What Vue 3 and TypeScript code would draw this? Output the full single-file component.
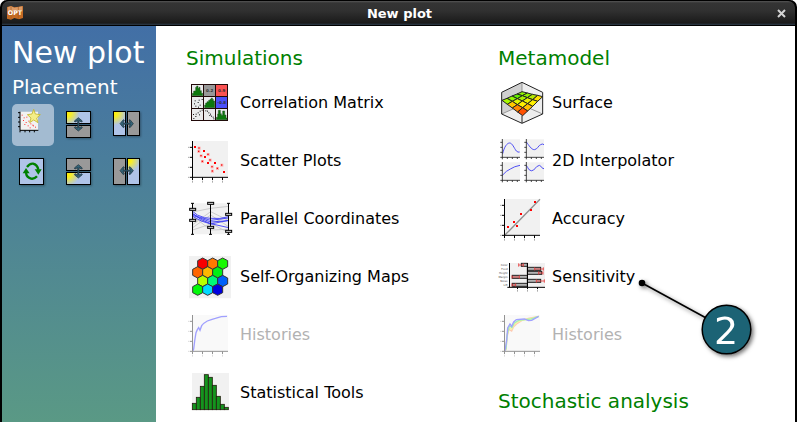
<script setup lang="ts">
import { ref } from 'vue'

interface PlotItem {
  label: string
  icon: string
  box: string
  disabled?: boolean
  callout?: string
}

interface PlotGroup {
  title: string
  items: PlotItem[]
}

interface Placement {
  id: string
  label: string
  box: string
}

type Point = [number, number]

const columns: PlotGroup[][] = [
  [
    {
      title: 'Simulations',
      items: [
        { label: 'Correlation Matrix', icon: 'matrix', box: '18 9 144 144' },
        { label: 'Scatter Plots', icon: 'scatter', box: '18 12 144 144' },
        { label: 'Parallel Coordinates', icon: 'parallel', box: '18 12 144 144' },
        { label: 'Self-Organizing Maps', icon: 'som', box: '18 12 144 144' },
        { label: 'Histories', icon: 'history', box: '18 12 144 144', disabled: true },
        { label: 'Statistical Tools', icon: 'stats', box: '18 186 144 144' },
      ],
    },
  ],
  [
    {
      title: 'Metamodel',
      items: [
        { label: 'Surface', icon: 'surface', box: '24 9 144 144' },
        { label: '2D Interpolator', icon: 'interpolator', box: '24 183 144 144' },
        { label: 'Accuracy', icon: 'accuracy', box: '24 12 144 144' },
        { label: 'Sensitivity', icon: 'sensitivity', box: '24 186 144 144', callout: '2' },
        { label: 'Histories', icon: 'histories', box: '24 12 144 144', disabled: true },
      ],
    },
    { title: 'Stochastic analysis', items: [] },
  ],
]

const placements: Placement[] = [
  { id: 'new', label: 'New window', box: '36 27 126 126' },
  { id: 'above', label: 'Split above', box: '177 27 126 126' },
  { id: 'left', label: 'Split left', box: '318 27 126 126' },
  { id: 'replace', label: 'Replace', box: '36 168 126 126' },
  { id: 'below', label: 'Split below', box: '177 168 126 126' },
  { id: 'right', label: 'Split right', box: '318 168 126 126' },
]

const placement = ref('new')

const matrixDots: Point[] = [
  [45, 77], [57, 75], [66, 73], [43, 86], [54, 82], [60, 90], [47, 93], [55, 96],
  [41, 130], [47, 124], [48, 117], [54, 113], [60, 108], [66, 105], [40, 118], [58, 119],
  [77, 107], [82, 108], [86, 113], [91, 117], [94, 123], [99, 126], [101, 131], [89, 121],
]

const scatterDots: Point[] = [[45, 45], [72, 57], [75, 75], [84, 93], [105, 93], [132, 120]]
const scatterSoft: Point[] = [
  [57, 48], [56, 58], [84, 67], [63, 71], [67, 88], [90, 84], [96, 104], [112, 109], [125, 99], [97, 117],
]
const miniDots: Point[] = [
  [66, 60], [72, 68], [80, 66], [70, 76], [78, 82], [74, 88], [86, 78], [92, 86], [84, 92], [98, 90], [90, 98], [106, 96], [100, 92],
]
const accuracyDots: Point[] = [[54, 111], [72, 96], [81, 108], [93, 72], [123, 60], [135, 36]]

const hexes: { at: Point; fill: string }[] = [
  { at: [68, 47], fill: '#f80000' }, { at: [98, 47], fill: '#ff7800' }, { at: [128, 47], fill: '#18f800' },
  { at: [53, 73], fill: '#ff6600' }, { at: [83, 73], fill: '#ffb800' }, { at: [113, 73], fill: '#00f014' },
  { at: [68, 99], fill: '#b8ff00' }, { at: [98, 99], fill: '#00f878' }, { at: [128, 99], fill: '#0060f8' },
  { at: [53, 125], fill: '#00f808' }, { at: [83, 125], fill: '#00d8ff' }, { at: [113, 125], fill: '#0000e0' },
]

const bars: number[] = [292, 274, 241, 206, 214, 238, 271, 295, 304]

const handles: Point[] = [[38, 58], [38, 91], [92, 40], [92, 112], [146, 73], [146, 124]]

const tileColors: string[] = [
  '#8df000', '#90f000', '#b4e800', '#ffe000',
  '#60f000', '#a8f000', '#e8f000', '#fff000',
  '#90f800', '#e0f800', '#fff000', '#ffc000',
  '#a8f800', '#ffc800', '#ff8800', '#ff5000',
]

const xAt = (u: number, v: number): number => Math.round(96 + 62 * u - 60 * v)

const yAt = (u: number, v: number): number =>
  Math.round(50 * (1 - u) * (1 - v) + 65 * u * (1 - v) + 76 * v * (1 - u) + 122 * u * v)

const tiles = tileColors.map((fill, i) => {
  const u = (i % 4) / 4
  const v = Math.floor(i / 4) / 4
  const corners: Point[] = [[u, v], [u + 0.25, v], [u + 0.25, v + 0.25], [u, v + 0.25]]
  return { fill, points: corners.map(([a, b]) => `${xAt(a, b)},${yAt(a, b)}`).join(' ') }
})

const factors = [
  { y: 220, x: 94, w: 18, from: 86, to: 100 },
  { y: 232, x: 112, w: 40, from: 134, to: 160 },
  { y: 244, x: 112, w: 43, from: 146, to: 159 },
  { y: 256, x: 67, w: 45, from: 66, to: 88 },
  { y: 268, x: 112, w: 40, from: 139, to: 163 },
  { y: 280, x: 67, w: 45, from: 66, to: 77 },
]
const factorNames: string[] = ['Color', 'Feed', 'Height', 'Margin', 'Noise', 'Lift']

const miniCurves: { x: number; y: number; d: string }[] = [
  { x: 37, y: 195, d: 'M1 41C6 20 14 9 22 9S35 24 42 33Q47 38 52 36' },
  { x: 109, y: 195, d: 'M0 6C8 16 15 29 24 29S37 15 43 14Q48 10 53 14' },
  { x: 37, y: 264, d: 'M0 37Q12 23 24 18Q36 10 53 7' },
  { x: 109, y: 264, d: 'M0 8Q4 12 7 19Q15 27 22 21L31 11Q40 3 45 11Q48 18 53 17' },
]
</script>

<template>
  <div class="window">
    <header class="titlebar">
      <svg class="logo" viewBox="0 0 48 42" aria-hidden="true">
        <path class="book-back" d="M0 3L12 0L22 4L36 2L48 0V36L36 40L22 36L12 41L0 38Z" />
        <path class="book-light" d="M2 4L12 1L22 5L34 3L46 1V13L2 17Z" />
        <path class="book-fold" d="M12 2V39M34 3V38" />
        <text x="24" y="28" text-anchor="middle">OPT</text>
      </svg>
      <span class="caption">New plot</span>
      <button class="close" type="button" aria-label="Close">
        <svg viewBox="0 0 9 9" aria-hidden="true"><path d="M1 1L8 8M8 1L1 8" /></svg>
      </button>
    </header>

    <div class="body">
      <aside class="sidebar">
        <h1>New plot</h1>
        <h2>Placement</h2>
        <div class="placements">
          <button
            v-for="p in placements"
            :key="p.id"
            type="button"
            class="place"
            :class="{ selected: placement === p.id }"
            :aria-label="p.label"
            :aria-pressed="placement === p.id"
            @click="placement = p.id"
          >
            <svg :viewBox="p.box" aria-hidden="true">
              <defs>
                <radialGradient :id="`glow-${p.id}`" gradientUnits="userSpaceOnUse" :cx="p.id === 'right' ? 386 : p.id === 'left' ? 344 : 204" :cy="p.id === 'right' ? 196 : p.id === 'below' ? 238 : 56" r="34">
                  <stop offset="0" stop-color="#fff000" />
                  <stop offset="0.3" stop-color="#f4ec30" />
                  <stop offset="1" stop-color="#b0c4e8" />
                </radialGradient>
              </defs>
              <template v-if="p.id === 'new'">
                <path fill="#f2f2f2" d="M60 50H114V105H60Z" />
                <rect v-for="(d, i) in miniDots" :key="i" :x="d[0] - 1" :y="d[1] - 1" width="3" height="3" fill="#ff3838" />
                <path class="axis" d="M60 50V106H115M54 53H60M54 67H60M54 81H60M54 95H60M60 106V112M75 106V112M89 106V112M103 106V112" />
                <path fill="#f4ee88" stroke="#c4b42c" stroke-width="2.5" d="M101 43L106 57L121 59L110 69L114 83L101 75L89 83L93 69L82 59L96 57Z" />
              </template>
              <template v-else-if="p.id === 'replace'">
                <rect x="58.500" y="190.500" width="72" height="78" fill="#b0c4e8" class="frame" />
                <g fill="none" stroke="#008000" stroke-width="7">
                  <path d="M81 216Q89 205 99 206Q112 209 115 224" />
                  <path d="M111 244Q103 253 93 251Q80 247 78 234" />
                </g>
                <path fill="#008000" d="M104 223H125L115 239ZM68 235H89L78 219Z" />
              </template>
              <template v-else-if="p.id === 'above'">
                <rect x="199.500" y="49.500" width="72" height="36" fill="url(#glow-above)" class="frame" />
                <rect x="199.500" y="91.500" width="72" height="36" fill="#999" class="frame" />
                <path class="arrow" d="M235 68L247 78L245 81L237 77V99L245 95L247 98L235 108L223 98L225 95L233 99V77L225 81L223 78Z" />
              </template>
              <template v-else-if="p.id === 'below'">
                <rect x="199.500" y="190.500" width="72" height="36" fill="#999" class="frame" />
                <rect x="199.500" y="232.500" width="72" height="36" fill="url(#glow-below)" class="frame" />
                <path class="arrow" d="M235 209L247 219L245 222L237 218V240L245 236L247 239L235 249L223 239L225 236L233 240V218L225 222L223 219Z" />
              </template>
              <template v-else-if="p.id === 'left'">
                <rect x="340.500" y="49.500" width="36" height="72" fill="url(#glow-left)" class="frame" />
                <rect x="382.500" y="49.500" width="36" height="72" fill="#999" class="frame" />
                <path class="arrow" d="M360 86L370 74L373 76L369 84H391L387 76L390 74L400 86L390 98L387 96L391 88H369L373 96L370 98Z" />
              </template>
              <template v-else>
                <rect x="340.500" y="190.500" width="36" height="78" fill="#999" class="frame" />
                <rect x="382.500" y="190.500" width="36" height="78" fill="url(#glow-right)" class="frame" />
                <path class="arrow" d="M360 227L370 215L373 217L369 225H391L387 217L390 215L400 227L390 239L387 237L391 229H369L373 237L370 239Z" />
              </template>
            </svg>
          </button>
        </div>
      </aside>

      <main class="content">
        <div v-for="(groups, c) in columns" :key="c" class="column">
          <section v-for="group in groups" :key="group.title">
            <h3>{{ group.title }}</h3>
            <ul v-if="group.items.length">
              <li v-for="item in group.items" :key="item.icon">
                <button type="button" class="plot" :disabled="item.disabled">
                  <svg class="icon" :viewBox="item.box" aria-hidden="true">
                    <template v-if="item.icon === 'matrix'">
                      <path fill="#200808" d="M33 27H144V138H33Z" />
                      <path fill="#eaeaec" d="M36 30H69V63H36ZM36 66H69V99H36ZM72 66H105V99H72ZM36 102H69V135H36ZM72 102H105V135H72ZM108 102H141V135H108Z" />
                      <path fill="#989898" d="M72 30H105V63H72Z" />
                      <path fill="#fa5252" d="M108 30H141V63H108Z" />
                      <path fill="#4c50f8" d="M108 66H141V99H108Z" />
                      <g fill="#0c780c" stroke="#245024" stroke-width="1.500">
                        <path d="M37 62V55H41V48H47V37H50V33H54V40H57V37H60V47H64V55H68V62Z" />
                        <path d="M74 98V90H77V84H81V80H86V76H90V73H94V69H97V73H100V78H104V98Z" />
                        <path d="M109 134V127H113V117H115V106H121V116H124V121H128V108H134V120H138V129H141V134Z" />
                      </g>
                      <rect v-for="(d, i) in matrixDots" :key="i" :x="d[0] - 1" :y="d[1] - 1" width="3" height="3" fill="#111" />
                      <g class="cell">
                        <text x="89" y="51">0.2</text>
                        <text x="125" y="51">0.9</text>
                        <text x="125" y="87">-0.8</text>
                      </g>
                    </template>

                    <template v-else-if="item.icon === 'scatter'">
                      <path fill="#f1f1f1" d="M38 27H144V136H38Z" />
                      <rect v-for="(d, i) in scatterSoft" :key="`s${i}`" :x="d[0] - 4" :y="d[1] - 4" width="9" height="9" fill="#ffb4b4" />
                      <rect v-for="(d, i) in scatterSoft" :key="`c${i}`" :x="d[0] - 2" :y="d[1] - 2" width="4" height="4" fill="#f01010" />
                      <rect v-for="(d, i) in scatterDots" :key="`d${i}`" :x="d[0] - 3" :y="d[1] - 3" width="6" height="6" fill="#f00" />
                      <path class="axis" d="M37.500 27V137M30 136H144M30 46H37M30 76H37M30 106H37M37.500 136V144M67.500 136V144M97.500 136V144M127.500 136V144" />
                      <path class="marks" d="M24 46H29M24 76H29M24 106H29M24 136H29M37.500 146V152M67.500 146V152M97.500 146V152M127.500 146V152" />
                    </template>

                    <template v-else-if="item.icon === 'parallel'">
                      <path fill="#f1f1f1" d="M38 40H146V133H38Z" />
                      <path fill="none" stroke="#c4c4c4" stroke-width="2.500" d="M38 66L92 55L146 49M38 120L92 102L146 78M38 104L92 65L146 92M38 85L92 100L146 128M38 113L92 75L146 110M38 78L92 120L146 118" />
                      <path fill="none" stroke="#3030f4" stroke-width="2.500" d="M38 64L52 75Q75 86 92 85Q120 88 146 80M38 72L54 80L92 91L146 84M38 76L92 96L146 92M38 70L62 88L92 101L146 113M38 79L64 93L92 102L146 91" />
                      <path class="axis" d="M37.500 40V133M91.500 40V133M145.500 40V133M33 40H42M87 40H96M141 40H150M33 133H42M87 133H96M141 133H150" />
                      <rect v-for="(h, i) in handles" :key="i" :x="h[0] - 9" :y="h[1] - 3" width="18" height="6" fill="#ddd" stroke="#000" stroke-width="3" />
                    </template>

                    <template v-else-if="item.icon === 'som'">
                      <path fill="#f1f1f1" d="M27 24H153V151H27Z" />
                      <path
                        v-for="(h, i) in hexes"
                        :key="i"
                        d="M0 -17L15 -9V9L0 17L-15 9V-9Z"
                        :transform="`translate(${h.at[0]} ${h.at[1]})`"
                        :fill="h.fill"
                        stroke="#333"
                        stroke-width="3"
                      />
                    </template>

                    <template v-else-if="item.icon === 'history'">
                      <path fill="#f1f1f1" d="M38 27H144V136H38Z" />
                      <path fill="none" stroke="#2020ff" stroke-width="4" d="M38 136L41 129L44 105L48 80L52 71L56 65L60 73L65 59Q71 51 82 45Q94 40 106 37L124 32Q134 31 141 31" />
                      <path class="axis" d="M37.500 27V137M30 136H144M30 46H37M30 76H37M30 106H37M37.500 136V144M67.500 136V144M97.500 136V144M127.500 136V144" />
                      <path class="marks" d="M24 46H29M24 76H29M24 106H29M24 136H29M37.500 146V152M67.500 146V152M97.500 146V152M127.500 146V152" />
                    </template>

                    <template v-else-if="item.icon === 'stats'">
                      <path fill="#f1f1f1" d="M36 201H147V312H36Z" />
                      <rect v-for="(top, i) in bars" :key="i" :x="37 + i * 12" :y="top" width="12" :height="311 - top" fill="#14941e" stroke="#242010" stroke-width="2.500" />
                    </template>

                    <template v-else-if="item.icon === 'surface'">
                      <path fill="#eee" d="M96 22L158 52V117L96 145L35 117V52Z" />
                      <path fill="#d0d0d0" d="M96 22V90L35 117V52Z" />
                      <path fill="none" stroke="#888" stroke-width="2.500" d="M96 24V90M96 90L35 117M96 90L158 117" />
                      <polygon v-for="(t, i) in tiles" :key="i" :points="t.points" :fill="t.fill" stroke="#222" stroke-width="3" />
                      <path fill="none" stroke="#222" stroke-width="3" d="M96 22L158 52V117L96 145L35 117V52ZM96 122V144" />
                    </template>

                    <template v-else-if="item.icon === 'interpolator'">
                      <g v-for="(m, i) in miniCurves" :key="i" :transform="`translate(${m.x} ${m.y})`">
                        <path fill="#f1f1f1" d="M0 -2H53V52H0Z" />
                        <path fill="none" stroke="#5050f4" stroke-width="3" :d="m.d" />
                        <path fill="none" stroke="#222" stroke-width="2.500" d="M0 -3V58M-6 52H53M-6 7H0M-6 22H0M-6 37H0M15 52V57M30 52V57M45 52V57" />
                      </g>
                    </template>

                    <template v-else-if="item.icon === 'accuracy'">
                      <path fill="#f1f1f1" d="M44 27H150V136H44Z" />
                      <path stroke="#909090" stroke-width="4" d="M44 136L150 28" />
                      <rect v-for="(d, i) in accuracyDots" :key="i" :x="d[0] - 3" :y="d[1] - 3" width="6" height="6" fill="#f00" />
                      <path class="axis" d="M43.500 27V137M36 136H150M36 46H43M36 76H43M36 106H43M43.500 136V144M73.500 136V144M103.500 136V144M133.500 136V144" />
                      <path class="marks" d="M30 46H35M30 76H35M30 106H35M30 136H35M43.500 146V152M73.500 146V152M103.500 146V152M133.500 146V152" />
                    </template>

                    <template v-else-if="item.icon === 'sensitivity'">
                      <path fill="#f1f1f1" d="M60 219H165V292H60Z" />
                      <g v-for="(f, i) in factors" :key="i">
                        <rect :x="f.x" :y="f.y" :width="f.w" height="9" fill="#b4b4b4" stroke="#222" stroke-width="3" />
                        <path fill="none" stroke="#e43838" stroke-width="2.500" :d="`M${f.from} ${f.y + 5}H${f.to}M${f.from} ${f.y}V${f.y + 10}M${f.to} ${f.y}V${f.y + 10}`" />
                        <text class="factor" x="53" :y="f.y + 8">{{ factorNames[i] }}</text>
                      </g>
                      <path class="axis" d="M58.500 219V292M52 292H165M112.500 219V292M82.500 292V297M112.500 292V297M142.500 292V297" />
                      <path class="marks" d="M82.500 299V305M112.500 299V305M142.500 299V305" />
                    </template>

                    <template v-else>
                      <path fill="#f1f1f1" d="M44 27H150V136H44Z" />
                      <g fill="none" stroke-width="4">
                        <path stroke="#ff8048" d="M48 132L51 93L57 70L65 75L71 62L82 52L96 43L115 37L146 31" />
                        <path stroke="#e8e820" d="M47 134L51 87L57 65L65 70L72 56L83 48L98 42L122 38L146 31" />
                        <path stroke="#28d848" d="M48 130L52 84L58 60L66 65L73 51L86 43L105 41L124 39L146 31" />
                        <path stroke="#2020ff" d="M45 135L50 102L53 66L60 54L65 61L71 48L79 41L103 39L115 44L125 43L146 31" />
                      </g>
                      <path class="axis" d="M43.500 27V137M36 136H150M36 46H43M36 76H43M36 106H43M43.500 136V144M73.500 136V144M103.500 136V144M133.500 136V144" />
                      <path class="marks" d="M30 46H35M30 76H35M30 106H35M30 136H35M43.500 146V152M73.500 146V152M103.500 146V152M133.500 146V152" />
                    </template>
                  </svg>
                  <span>{{ item.label }}</span>
                </button>

                <svg v-if="item.callout" class="callout" viewBox="0 0 150 110">
                  <circle cx="22" cy="23" r="3.300" />
                  <path d="M22 23L88 59" stroke="#000" stroke-width="1.600" />
                  <circle cx="106.500" cy="69.500" r="24.300" fill="#1c6375" stroke="#000" stroke-width="1.500" />
                  <text x="106" y="84" text-anchor="middle">{{ item.callout }}</text>
                </svg>
              </li>
            </ul>
          </section>
        </div>
      </main>
    </div>
  </div>
</template>

<style>
body {
  margin: 0;
  background: #fff;
}
</style>

<style scoped>
.window {
  box-sizing: border-box;
  display: flex;
  flex-direction: column;
  min-height: 100vh;
  border: solid #000;
  border-width: 0 2px;
  border-radius: 7px 7px 0 0;
  background: #000;
  color: #000;
  font-family: "DejaVu Sans", sans-serif;
  font-size: 16px;
  overflow: hidden;
}

.titlebar {
  box-sizing: border-box;
  display: grid;
  grid-template-columns: 24px 1fr 24px;
  align-items: center;
  height: 26px;
  padding: 0 2px 0 4px;
  border-top: 1px solid #000;
  border-bottom: 1px solid #000;
  border-radius: 7px 7px 0 0;
  background: linear-gradient(#565656 0, #343434 2px, #303030 10px, #1a1a1a 22px, #2c3c4c 24px);
}

.logo {
  width: 16px;
  height: 14px;
  margin-left: 1px;
}

.book-back {
  fill: #c46a24;
}

.book-light {
  fill: #dc9c68;
}

.book-fold {
  stroke: #a85818;
  stroke-width: 2;
}

.logo text {
  fill: #fff;
  font-size: 19px;
  font-weight: bold;
}

.caption {
  color: #fff;
  font-size: 13px;
  font-weight: bold;
  text-align: center;
}

.close {
  display: grid;
  place-items: center;
  padding: 0;
  border: 0;
  background: none;
  height: 20px;
}

.close svg {
  width: 9px;
  height: 9px;
  fill: none;
  stroke: #d4d4d4;
  stroke-width: 2;
}

.body {
  display: flex;
  flex: 1;
}

.sidebar {
  box-sizing: border-box;
  flex: 0 0 154px;
  padding: 10px 8px 0 10px;
  background: linear-gradient(#426fa6, #5a9985);
  color: #fff;
}

h1,
h2,
h3 {
  margin: 0;
  font-weight: normal;
}

h1 {
  font-size: 30px;
  line-height: 34px;
  white-space: nowrap;
}

h2 {
  font-size: 20px;
  line-height: 34px;
}

.placements {
  display: grid;
  grid-template-columns: repeat(3, 42px);
  gap: 5px;
}

.place {
  width: 42px;
  height: 42px;
  padding: 0;
  border: 0;
  border-radius: 5px;
  background: none;
}

.place.selected {
  background: #a3bbd1;
}

.place svg {
  display: block;
  width: 42px;
  height: 42px;
  filter: drop-shadow(1px 1px 1px rgba(0, 0, 0, 0.3));
}

.place.selected svg {
  filter: none;
}

.frame {
  stroke: #000;
  stroke-width: 3;
}

.arrow {
  fill: #346478;
  stroke: #182c38;
  stroke-width: 2;
}

.content {
  display: grid;
  flex: 1;
  grid-template-columns: 1fr 1fr;
  gap: 24px;
  padding: 18px 9px 0 30px;
  background: #fff;
}

section + section {
  margin-top: 24px;
}

h3 {
  color: #008000;
  font-size: 20px;
  line-height: 29px;
}

ul {
  margin: 0;
  padding: 0;
  list-style: none;
}

li {
  position: relative;
}

.plot {
  display: flex;
  align-items: center;
  gap: 6px;
  width: 100%;
  height: 58px;
  padding: 0;
  border: 0;
  background: none;
  color: inherit;
  font: inherit;
}

.plot:disabled {
  color: #b2b2b2;
}

.plot:disabled .icon {
  opacity: 0.42;
}

.icon {
  flex: none;
  width: 48px;
  height: 48px;
}

.axis {
  fill: none;
  stroke: #000;
  stroke-width: 3;
}

.marks {
  fill: none;
  stroke: #aaa;
  stroke-width: 3;
}

.cell text {
  fill: #303030;
  font-size: 12px;
  font-weight: bold;
  text-anchor: middle;
}

.factor {
  fill: #444;
  font-size: 8px;
  text-anchor: end;
}

.callout {
  position: absolute;
  top: 13px;
  left: 122px;
  z-index: 1;
  width: 150px;
  height: 110px;
  filter: drop-shadow(2px 2px 2px rgba(0, 0, 0, 0.55));
  pointer-events: none;
}

.callout text {
  fill: #fff;
  font-size: 38px;
}
</style>
